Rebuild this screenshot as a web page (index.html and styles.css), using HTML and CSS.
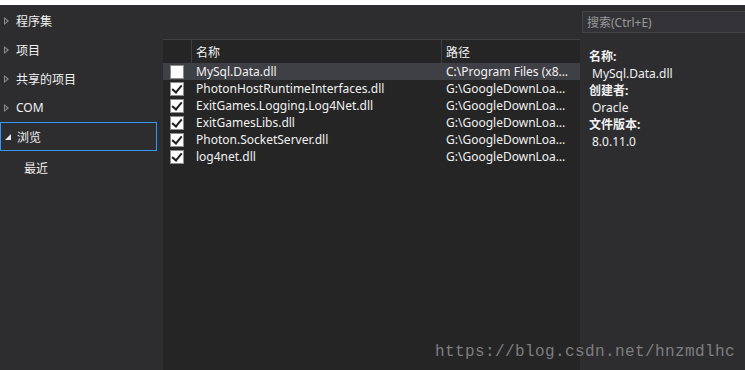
FILE: index.html
```html
<!DOCTYPE html>
<html lang="zh-CN">
<head>
    <meta charset="UTF-8">
    <title>引用管理器</title>
    <link rel="stylesheet" href="styles.css">
</head>
<body>

<div class="window">
    <!-- Left: categories -->
    <ul class="nav">
        <li><span class="arrow"></span>程序集</li>
        <li><span class="arrow"></span>项目</li>
        <li><span class="arrow"></span>共享的项目</li>
        <li><span class="arrow"></span>COM</li>
        <li class="selected"><span class="arrow open"></span>浏览</li>
        <li class="child">最近</li>
    </ul>

    <!-- Middle: file list -->
    <div class="list">
        <div class="row head">
            <div class="cell check"></div>
            <div class="cell name">名称</div>
            <div class="cell path">路径</div>
        </div>
        <div class="row current">
            <div class="cell check"><span class="box"></span></div>
            <div class="cell name">MySql.Data.dll</div>
            <div class="cell path">C:\Program Files (x86)\MySQL\Connector.NET 8.0</div>
        </div>
        <div class="row">
            <div class="cell check"><span class="box on"></span></div>
            <div class="cell name">PhotonHostRuntimeInterfaces.dll</div>
            <div class="cell path">G:\GoogleDownLoad\Photon</div>
        </div>
        <div class="row">
            <div class="cell check"><span class="box on"></span></div>
            <div class="cell name">ExitGames.Logging.Log4Net.dll</div>
            <div class="cell path">G:\GoogleDownLoad\Photon</div>
        </div>
        <div class="row">
            <div class="cell check"><span class="box on"></span></div>
            <div class="cell name">ExitGamesLibs.dll</div>
            <div class="cell path">G:\GoogleDownLoad\Photon</div>
        </div>
        <div class="row">
            <div class="cell check"><span class="box on"></span></div>
            <div class="cell name">Photon.SocketServer.dll</div>
            <div class="cell path">G:\GoogleDownLoad\Photon</div>
        </div>
        <div class="row">
            <div class="cell check"><span class="box on"></span></div>
            <div class="cell name">log4net.dll</div>
            <div class="cell path">G:\GoogleDownLoad\Photon</div>
        </div>
    </div>

    <!-- Right: search + details -->
    <div class="side">
        <div class="search">搜索(Ctrl+E)</div>
        <dl class="info">
            <dt>名称:</dt>
            <dd>MySql.Data.dll</dd>
            <dt>创建者:</dt>
            <dd>Oracle</dd>
            <dt>文件版本:</dt>
            <dd>8.0.11.0</dd>
        </dl>
    </div>

    <div class="watermark">https://blog.csdn.net/hnzmdlhc</div>
</div>

</body>
</html>
```

FILE: styles.css
```css
body {
    margin: 0;
    background-color: #fff;
    font-family: 'Noto Sans', 'Noto Sans CJK SC', sans-serif;
    font-size: 12px;
    color: #f1f1f1;
}

.window {
    position: relative;
    margin-top: 5px;
    height: 365px;
    display: flex;
    background-color: #2d2d30;
    overflow: hidden;
}

/* Left navigation */
.nav {
    list-style: none;
    margin: 0;
    padding: 1px 0 0;
    width: 163px;
    flex-shrink: 0;
}

.nav li {
    display: flex;
    align-items: center;
    height: 29px;
    margin-right: 6px;
    box-sizing: border-box;
    padding-left: 4px;
}

.nav li.selected {
    border: 1px solid #3399ff;
    padding-left: 3px;
}

.nav li.child {
    padding-left: 24px;
    height: 33px;
}

.arrow {
    width: 0;
    height: 0;
    border-top: 4px solid transparent;
    border-bottom: 4px solid transparent;
    border-left: 5px solid #8a8a8a;
    margin-right: 7px;
    position: relative;
}

.arrow::after {
    content: "";
    position: absolute;
    left: -4px;
    top: -2px;
    border-top: 2px solid transparent;
    border-bottom: 2px solid transparent;
    border-left: 2px solid #2d2d30;
}

.arrow.open {
    border-top: 0;
    border-left: 6px solid transparent;
    border-bottom: 6px solid #e8e8e8;
    margin-left: 1px;
    margin-right: 6px;
}

.arrow.open::after {
    display: none;
}

/* Middle list */
.list {
    width: 417px;
    flex-shrink: 0;
    margin-top: 34px;
    background-color: #252526;
}

.row {
    display: flex;
    height: 17px;
    align-items: center;
}

.row.head {
    height: 23px;
    border-top: 1px solid #3f3f46;
}

.row.head .cell {
    height: 100%;
    display: flex;
    align-items: center;
}

.row.head .cell + .cell {
    border-left: 1px solid #3f3f46;
}

.row.current {
    background-color: #3f3f46;
}

.cell {
    box-sizing: border-box;
    white-space: nowrap;
    overflow: hidden;
    text-overflow: ellipsis;
}

.cell.check {
    width: 28px;
    display: flex;
    justify-content: center;
}

.cell.name {
    width: 250px;
    padding-left: 5px;
}

.cell.path {
    width: 131px;
    padding-left: 5px;
}

.row.head .cell.name {
    padding-left: 4px;
}

.row.head .cell.path {
    padding-left: 4px;
}

.box {
    width: 12px;
    height: 12px;
    background-color: #fff;
    border: 1px solid #8c8c8c;
    position: relative;
}

.box.on::after {
    content: "";
    position: absolute;
    left: 3px;
    top: 0;
    width: 4px;
    height: 8px;
    border-right: 2px solid #1e1e1e;
    border-bottom: 2px solid #1e1e1e;
    transform: rotate(40deg);
}

/* Right side */
.side {
    flex: 1;
    padding-left: 2px;
}

.search {
    margin-top: 6px;
    height: 22px;
    box-sizing: border-box;
    border: 1px solid #434346;
    border-right: 0;
    background-color: #333337;
    color: #999;
    padding-left: 4px;
    display: flex;
    align-items: center;
}

.info {
    margin: 15px 0 0;
    padding-left: 7px;
}

.info dt {
    font-weight: bold;
    line-height: 17px;
}

.info dd {
    margin: 0;
    padding-left: 3px;
    line-height: 17px;
}

/* Blog watermark over the window */
.watermark {
    position: absolute;
    right: 10px;
    bottom: 9px;
    font-family: 'Liberation Mono', monospace;
    font-size: 16px;
    letter-spacing: 0.4px;
    color: #7d7d7d;
}
```
